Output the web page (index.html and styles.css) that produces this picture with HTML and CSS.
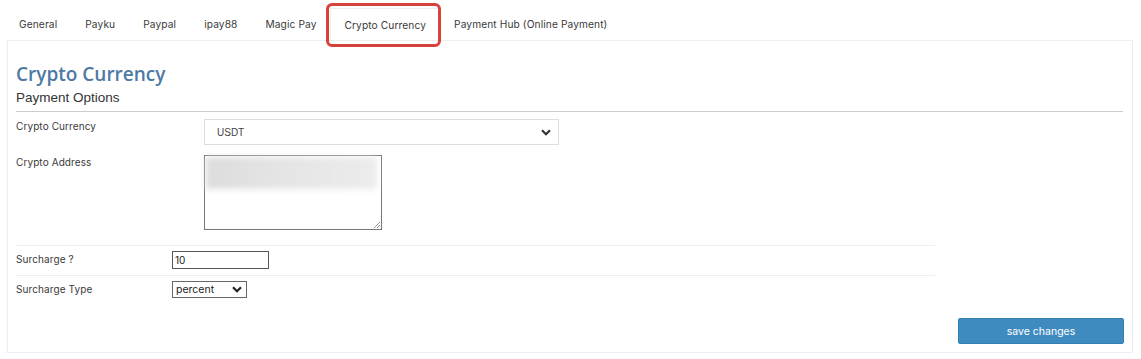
FILE: index.html
```html
<!DOCTYPE html>
<html>
<head>
<meta charset="utf-8">
<link rel="stylesheet" href="styles.css">
</head>
<body>
<div class="tabs">
  <div class="tab">General</div>
  <div class="tab">Payku</div>
  <div class="tab">Paypal</div>
  <div class="tab">ipay88</div>
  <div class="tab">Magic Pay</div>
  <div class="tab active">Crypto Currency<span class="mark"></span></div>
  <div class="tab">Payment Hub (Online Payment)</div>
</div>
<div class="panel">
  <h2 class="title">Crypto Currency</h2>
  <h3 class="subtitle">Payment Options</h3>
  <div class="section">
    <div class="row">
      <label class="lbl lbl-wide">Crypto Currency</label>
      <div class="fake-select big">
        <span>USDT</span>
        <svg class="chev" width="10" height="7" viewBox="0 0 10 7"><path d="M1 1.2 L5 5.2 L9 1.2" fill="none" stroke="#333" stroke-width="2.2"/></svg>
      </div>
    </div>
    <div class="row">
      <label class="lbl lbl-wide">Crypto Address</label>
      <div class="textarea">
        <div class="blur"></div>
        <svg class="grip" width="7" height="7" viewBox="0 0 7 7"><path d="M1 7 L7 1 M4 7 L7 4" stroke="#777" stroke-width="0.8"/></svg>
      </div>
    </div>
  </div>
  <div class="lines">
    <div class="row2">
      <label class="lbl lbl-narrow">Surcharge ?</label>
      <div class="input">10</div>
    </div>
    <div class="row2">
      <label class="lbl lbl-narrow">Surcharge Type</label>
      <div class="small-select">
        <span>percent</span>
        <svg width="10" height="7" viewBox="0 0 10 7"><path d="M1 1.2 L5 5.2 L9 1.2" fill="none" stroke="#222" stroke-width="2.2"/></svg>
      </div>
    </div>
  </div>
  <div class="actions">
    <button class="save">save changes</button>
  </div>
</div>
</body>
</html>
```
FILE: styles.css
```css
* { box-sizing: border-box; }
body {
  margin: 0;
  background: #fff;
  font-family: Inter, "Noto Sans", sans-serif;
  color: #333;
}
.tabs {
  display: flex;
  padding: 8px 0 0 5px;
  height: 40px;
}
.tab {
  position: relative;
  padding: 0 14px;
  height: 32px;
  line-height: 32px;
  font-size: 10.2px;
  color: #3a3a3a;
  letter-spacing: 0.1px;
}
.tab.active {
  background: #fff;
  border: 1px solid #eee;
  border-bottom: none;
  padding: 0 13px;
}
.mark {
  position: absolute;
  left: -5px;
  right: -2px;
  top: -6px;
  bottom: -7px;
  border: 3px solid #d6423c;
  border-radius: 6px;
}
.panel {
  margin: 0 8px 0 7px;
  border: 1px solid #eee;
  box-shadow: 0 1px 1px rgba(0,0,0,0.06);
  height: 313px;
  padding: 0 8px 0 8px;
  display: flex;
  flex-direction: column;
}
.title {
  margin: 21px 0 0;
  font-family: "Open Sans", sans-serif;
  font-weight: 600;
  font-size: 19px;
  line-height: 24px;
  color: #4d79a3;
}
.subtitle {
  margin: 0;
  font-family: "Liberation Sans", Arial, sans-serif;
  font-weight: 400;
  font-size: 13.5px;
  line-height: 21px;
  color: #333;
  padding: 1px 0 3px;
  border-bottom: 1px solid #ccc;
  margin-right: 1px;
}
.section {
  padding-top: 7px;
}
.row {
  display: flex;
  align-items: flex-start;
  margin-bottom: 10px;
}
.lbl {
  font-size: 10px;
  color: #3a3a3a;
  line-height: 14px;
  letter-spacing: 0.1px;
}
.lbl-wide { width: 188px; }
.lbl-narrow { width: 156px; }
.fake-select {
  width: 355px;
  height: 26px;
  border: 1px solid #ddd;
  display: flex;
  align-items: center;
  justify-content: space-between;
  padding: 0 7px 0 12px;
  font-family: "Liberation Sans", Arial, sans-serif;
  font-size: 10px;
  color: #444;
}
.textarea {
  position: relative;
  width: 178px;
  height: 75px;
  border: 1px solid #777;
  margin-bottom: 5px;
}
.blur {
  position: absolute;
  left: 1px; top: 1px;
  width: 171px; height: 32px;
  background: linear-gradient(90deg, #dcdcdc 0%, #e4e4e4 40%, #ececec 100%);
  filter: blur(3px);
}
.grip {
  position: absolute;
  right: 1px; bottom: 1px;
}
.lines {
  width: 919px;
  border-top: 1px solid #eee;
}
.row2 {
  display: flex;
  align-items: flex-start;
  height: 30px;
  padding-top: 5px;
  border-bottom: 1px solid #eee;
}
.row2 .lbl { margin-top: 1px; }
.row2:last-child { border-bottom: none; }
.input {
  width: 97px;
  height: 18px;
  border: 1px solid #555;
  font-size: 10px;
  line-height: 16px;
  padding-left: 2px;
  color: #222;
}
.small-select {
  width: 75px;
  height: 17px;
  border: 1px solid #666;
  display: flex;
  align-items: center;
  justify-content: space-between;
  padding: 0 4px 0 3px;
  font-size: 10.5px;
  color: #222;
}
.actions {
  margin-top: auto;
  display: flex;
  justify-content: flex-end;
  padding-bottom: 8px;
}
.save {
  width: 166px;
  height: 26px;
  background: #3f8bbf;
  border: 1px solid #3580b3;
  border-radius: 2px;
  color: #fff;
  font-family: Inter, sans-serif;
  font-size: 10.5px;
}
```
